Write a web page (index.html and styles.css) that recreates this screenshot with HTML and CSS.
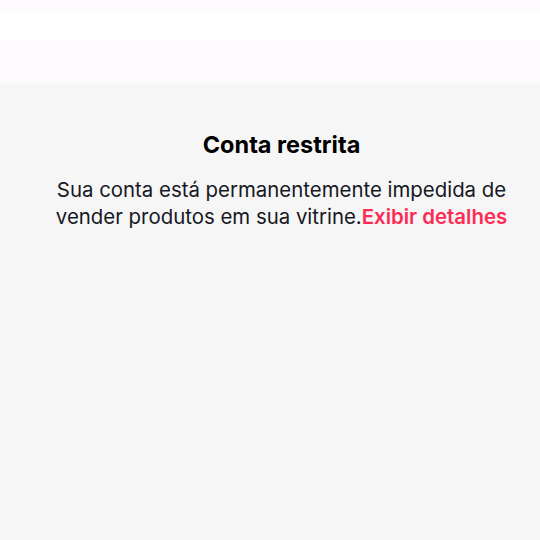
FILE: index.html
```html
<!DOCTYPE html>
<html lang="pt">
<head>
<meta charset="utf-8">
<link rel="stylesheet" href="styles.css">
</head>
<body>
<header class="top">
  <div class="band-a"></div>
  <div class="band-b"></div>
  <div class="band-c"></div>
</header>
<main class="content">
  <h1 class="title">Conta restrita</h1>
  <p class="msg">Sua conta está permanentemente impedida de vender produtos em sua vitrine.<a class="link">Exibir detalhes</a></p>
</main>
</body>
</html>
```

FILE: styles.css
```css
html, body {
  margin: 0;
  padding: 0;
  height: 100%;
}
body {
  background: #f6f6f6;
  font-family: Inter, "Noto Sans", sans-serif;
  color: #161823;
}
.top {
  display: flex;
  flex-direction: column;
}
.band-a { height: 10px; background: #fffafd; }
.band-b { height: 30px; background: #fefefe; }
.band-c { height: 42px; background: #fffafd; border-bottom: 2px solid #faf8f9; }
.content {
  padding: 47px 20px 0 43px;
  text-align: center;
}
.title {
  margin: 0;
  font-size: 23.5px;
  font-weight: 700;
  color: #000;
  line-height: 28px;
}
.msg {
  margin: 17px 0 0;
  font-size: 20.4px;
  line-height: 27px;
  color: #161823;
}
.link {
  color: #fe2c55;
  font-weight: 600;
}
```
